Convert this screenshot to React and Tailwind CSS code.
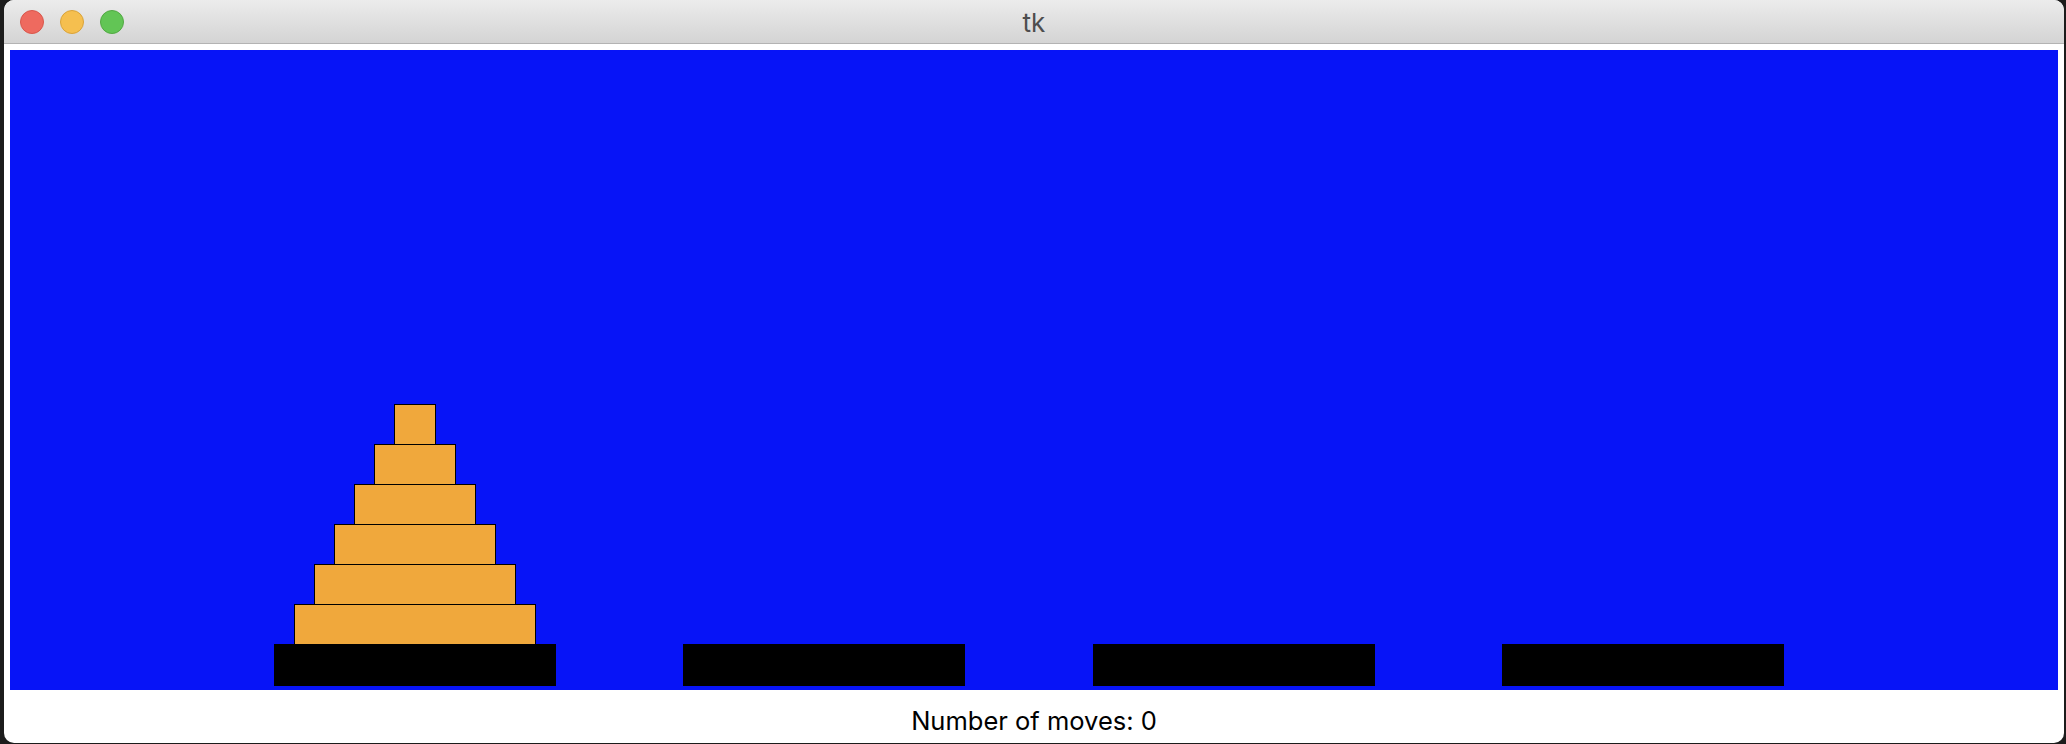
const disks = [
  "w-[41.33px]",
  "w-[81.33px]",
  "w-[121.33px]",
  "w-[161.33px]",
  "w-[201.33px]",
  "w-[241.33px]",
];

function Peg({ children }) {
  return (
    <div className="flex flex-col items-center w-[282px]">
      {children}
      <div className="w-[282px] h-[42px] bg-black" />
    </div>
  );
}

export default function App() {
  return (
    <div className="w-full h-[744px] bg-[#1c1c1c] pl-[4px] pr-[2px] overflow-hidden">
      <div className="h-[743px] bg-white rounded-[10px] overflow-hidden flex flex-col">
        <div className="h-[44px] shrink-0 grid grid-cols-[1fr_auto_1fr] items-center bg-gradient-to-b from-[#ececec] to-[#d4d4d4] border-b border-[#b3b3b3]">
          <div className="flex items-center gap-[16px] pl-[16px]">
            <div className="w-[24px] h-[24px] rounded-full bg-[#ee6a5f] border border-[#d8574c]" />
            <div className="w-[24px] h-[24px] rounded-full bg-[#f5bf4f] border border-[#d9a33a]" />
            <div className="w-[24px] h-[24px] rounded-full bg-[#62c555] border border-[#52a843]" />
          </div>
          <div className="pt-[2px] text-[26px] leading-none text-[#4d4d4d] font-['Inter',sans-serif]">tk</div>
          <div />
        </div>

        <div className="mx-[6px] mt-[6px] h-[640px] shrink-0 bg-[#0714f7] flex items-end pl-[264px] pb-[4px] gap-[127.33px]">
          <Peg>
            {disks.map((w) => (
              <div
                key={w}
                className={`${w} h-[41.33px] -mb-[1.33px] bg-[#f0a83c] border-[1.5px] border-black box-border`}
              />
            ))}
          </Peg>
          <Peg />
          <Peg />
          <Peg />
        </div>

        <div className="flex-1 flex justify-center pt-[16px]">
          <span className="text-[25.5px] leading-[30px] text-black font-['Inter',sans-serif]">
            Number of moves: 0
          </span>
        </div>
      </div>
    </div>
  );
}
